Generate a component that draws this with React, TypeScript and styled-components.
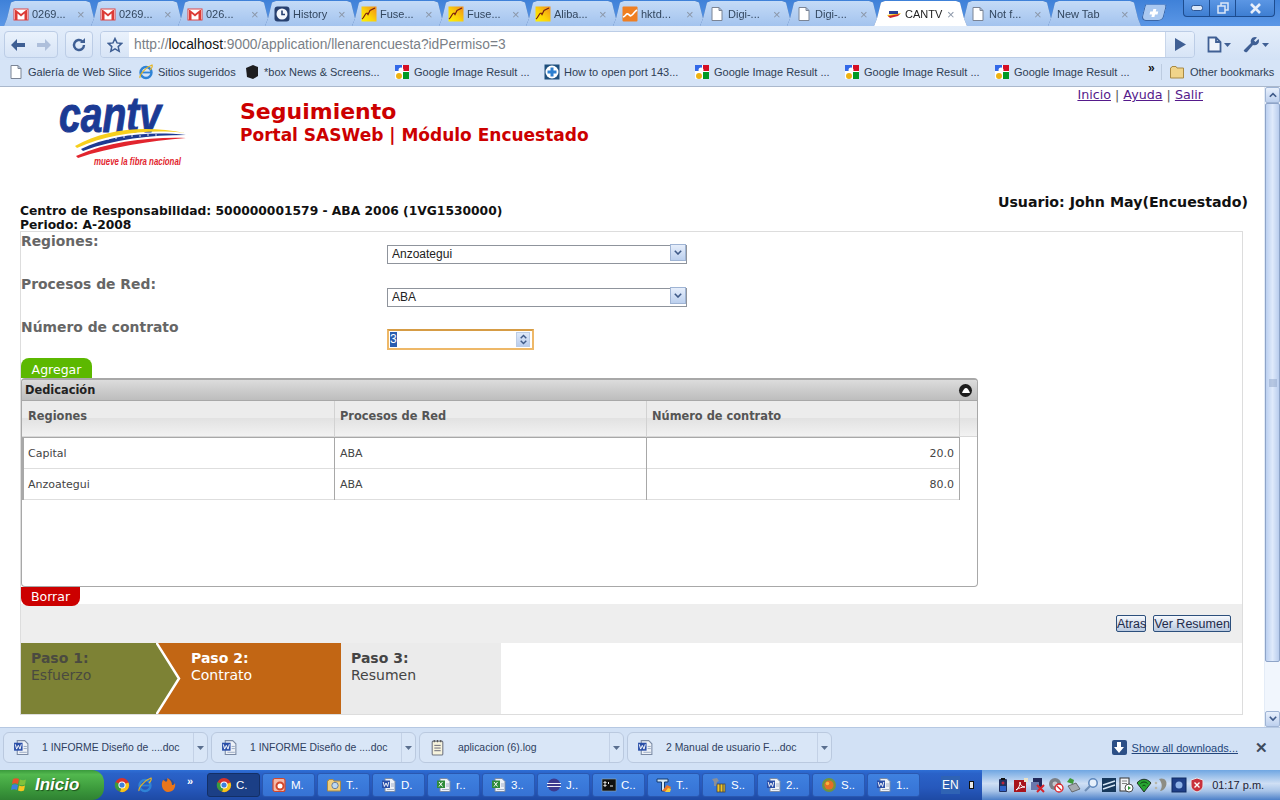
import React from "react";
import styled, { createGlobalStyle } from "styled-components";

const GlobalStyle = createGlobalStyle`
    html, body {
        margin: 0;
        padding: 0;
        background: #fff;
    }
    * {
        box-sizing: border-box;
    }
`;

const UI_FONT = `"Liberation Sans", Arial, sans-serif`;
const PAGE_FONT = `"DejaVu Sans", Verdana, sans-serif`;

type IconName =
    | "gmail" | "clock" | "fuse" | "hktd" | "doc" | "cantv" | "ie" | "box" | "google" | "plus"
    | "folder" | "word" | "log" | "chrome" | "firefox" | "office" | "search" | "excel" | "eclipse"
    | "cmd" | "tfont" | "tool" | "flower";

const IconSvg = styled.svg`
    flex: none;
`;

const Icon: React.FC<{ name: IconName; size?: number }> = ({ name, size = 16 }) => {
    const body = () => {
        switch (name) {
            case "gmail":
                return (
                    <>
                        <rect x="1" y="3" width="14" height="11" fill="#fff" stroke="#d44" strokeWidth="1" />
                        <path d="M2 4v10h2.5V7.5L8 10.5l3.5-3V14H14V4h-1L8 8 3 4z" fill="#dc3b36" />
                    </>
                );
            case "clock":
                return (
                    <>
                        <rect x="0.5" y="0.5" width="15" height="15" rx="3" fill="#27406f" />
                        <circle cx="8" cy="8" r="5.5" fill="#f4f6fa" />
                        <path d="M8 4.5V8.5H11" fill="none" stroke="#27406f" strokeWidth="1.6" />
                    </>
                );
            case "fuse":
                return (
                    <>
                        <defs>
                            <linearGradient id="fuseFill" x1="1" y1="0" x2="0" y2="1">
                                <stop offset="0" stopColor="#f08a1c" />
                                <stop offset="0.55" stopColor="#fbd208" />
                                <stop offset="1" stopColor="#fff200" />
                            </linearGradient>
                        </defs>
                        <rect x="0.5" y="0.5" width="15" height="15" fill="url(#fuseFill)" />
                        <path d="M1 13C3 12 4 7 6 7l1 1.5 2-4 5-2.5" fill="none" stroke="#7a1d10" strokeWidth="1.2" />
                    </>
                );
            case "hktd":
                return (
                    <>
                        <rect x="0.5" y="0.5" width="15" height="15" rx="1" fill="#ef7f22" />
                        <path d="M1 11c3-1 3-4 5-3s2 3 4 1 3-4 5-5" fill="none" stroke="#fff" strokeWidth="1.6" />
                    </>
                );
            case "doc":
                return <path d="M3 1.5h7l3 3v10H3z M10 1.5v3h3" fill="#fff" stroke="#7b8494" strokeWidth="1" />;
            case "cantv":
                return (
                    <>
                        <path d="M1 9l14-2-2 2-10 2z" fill="#f0c419" />
                        <path d="M2 10l12-2-2 2-8 2z" fill="#d2232a" />
                        <rect x="3" y="5" width="9" height="3" fill="#2b3f94" />
                    </>
                );
            case "ie":
                return (
                    <>
                        <circle cx="8" cy="8.5" r="5.5" fill="none" stroke="#2f83d6" strokeWidth="2.4" />
                        <path d="M3 8.5h10" stroke="#2f83d6" strokeWidth="1.8" />
                        <path d="M2 14C1 11 8 3 14 1c1 2-1 4-2 5" fill="none" stroke="#e6b422" strokeWidth="1.2" />
                    </>
                );
            case "box":
                return <path d="M2 4l7-3 5 2v9l-5 3-6-2z" fill="#1d1d1f" />;
            case "google":
                return (
                    <>
                        <rect x="1" y="1" width="14" height="14" rx="1" fill="#fff" />
                        <rect x="1" y="1" width="7" height="6" fill="#3369e8" />
                        <rect x="9" y="1" width="6" height="6" fill="#d50f25" />
                        <rect x="9" y="8" width="6" height="7" fill="#009925" />
                        <circle cx="5" cy="12" r="3" fill="#eeb211" />
                        <circle cx="7" cy="6" r="2.5" fill="#fff" />
                    </>
                );
            case "plus":
                return (
                    <>
                        <rect x="0.5" y="0.5" width="15" height="15" fill="#1e4f7d" />
                        <circle cx="8" cy="8" r="6.5" fill="#fff" />
                        <path d="M8 3.5v9M3.5 8h9" stroke="#2c7fd0" strokeWidth="3" />
                    </>
                );
            case "folder":
                return <path d="M1.5 4V14h13V4H8L7 2.5H3L2 4z" fill="#f0d48a" stroke="#a98a45" strokeWidth="1" />;
            case "word":
                return (
                    <>
                        <path d="M4 1.5h7l3 3v10H4z" fill="#eef2f8" stroke="#7b8aa4" strokeWidth="1" />
                        <rect x="1" y="3.5" width="8" height="7.5" fill="#2a4fa8" />
                        <path d="M2.2 5l1.2 4.5L5 6l1.6 3.5L7.8 5" fill="none" stroke="#fff" strokeWidth="0.9" />
                        <path d="M10 7h3M10 9h3M6 12.5h7" stroke="#8fa0bb" strokeWidth="0.8" />
                    </>
                );
            case "log":
                return (
                    <>
                        <rect x="3" y="2" width="10" height="13" rx="1" fill="#f6f3dc" stroke="#6f7480" strokeWidth="1" />
                        <path d="M5 1v2M8 1v2M11 1v2" stroke="#555" strokeWidth="1" />
                        <path d="M5 6h6M5 8.5h6M5 11h6" stroke="#667" strokeWidth="0.9" />
                    </>
                );
            case "chrome":
                return (
                    <>
                        <circle cx="8" cy="8" r="7" fill="#d8332a" />
                        <path d="M8 8L14.5 5.5A7 7 0 0 1 6 14.8z" fill="#f5c518" />
                        <path d="M8 8L6 14.8A7 7 0 0 1 1.5 5z" fill="#3a9a3f" />
                        <circle cx="8" cy="8" r="3.6" fill="#fff" />
                        <circle cx="8" cy="8" r="2.6" fill="#3d7fdb" />
                    </>
                );
            case "firefox":
                return (
                    <>
                        <circle cx="8" cy="8" r="6.5" fill="#2b4e96" />
                        <path d="M3 3c-3 5 0 12 5 12s8-4 7-9c-1 2-2 2-3 2 0-3-2-6-5-7 1 2 0 3-1 4-1-1-2-2-3-2z" fill="#e8761c" />
                    </>
                );
            case "office":
                return (
                    <>
                        <rect x="2" y="1.5" width="12" height="13" rx="2" fill="#f3b9a8" stroke="#d2472c" strokeWidth="1.2" />
                        <circle cx="9" cy="9" r="3.5" fill="#fff" stroke="#d2472c" strokeWidth="2" />
                    </>
                );
            case "search":
                return (
                    <>
                        <path d="M1.5 4V14h13V4H8L7 2.5H3L2 4z" fill="#f0cf7e" stroke="#a98a45" strokeWidth="1" />
                        <circle cx="9" cy="8.5" r="3.2" fill="#bcd8f2" stroke="#6b7f99" strokeWidth="1" />
                    </>
                );
            case "excel":
                return (
                    <>
                        <path d="M4 1.5h7l3 3v10H4z" fill="#eef2f8" stroke="#7b8aa4" strokeWidth="1" />
                        <rect x="1" y="3.5" width="8" height="7.5" fill="#2e8b3a" />
                        <path d="M3 5l3.5 4.5M6.5 5L3 9.5" stroke="#fff" strokeWidth="1" />
                        <path d="M10 7h3M10 9h3M6 12.5h7" stroke="#8fa0bb" strokeWidth="0.8" />
                    </>
                );
            case "eclipse":
                return (
                    <>
                        <circle cx="8" cy="8" r="6.5" fill="#3d3a8f" />
                        <path d="M1 6.5h14M1 9.5h14" stroke="#f0f0f8" strokeWidth="1.2" />
                    </>
                );
            case "cmd":
                return (
                    <>
                        <rect x="1" y="2" width="14" height="12" fill="#111" stroke="#9aa" strokeWidth="0.6" />
                        <path d="M3 5h2v1H3zM3 8h2v1H3zM7 5l1 1-1 1M9 9h3" stroke="#eee" strokeWidth="1" fill="none" />
                    </>
                );
            case "tfont":
                return (
                    <>
                        <path d="M1 2h11v3H8.5v9h-3V5H1z" fill="#d6e8f5" stroke="#143a6d" strokeWidth="1" />
                        <path d="M6 14l5-6 4 2-2 5z" fill="#e8762b" />
                        <path d="M9 15l3-4 3 1-1 3z" fill="#f3cf3a" />
                    </>
                );
            case "tool":
                return (
                    <>
                        <rect x="6" y="7" width="8" height="8" fill="#f2c623" stroke="#444" strokeWidth="0.8" />
                        <path d="M9 7v8M12 7v8" stroke="#444" strokeWidth="1" />
                        <path d="M1 2l5-1 2 3-2 1-1 4-2 0 0-4z" fill="#8a8f98" />
                    </>
                );
            case "flower":
                return (
                    <>
                        <circle cx="8" cy="8" r="7" fill="#6f9440" />
                        <circle cx="8" cy="8" r="4.6" fill="#e46f26" />
                        <circle cx="6.5" cy="6.5" r="1.8" fill="#f5b63a" />
                    </>
                );
        }
    };
    return (
        <IconSvg width={size} height={size} viewBox="0 0 16 16">
            {body()}
        </IconSvg>
    );
};

const Screen = styled.div`
    width: 1280px;
    height: 800px;
    display: flex;
    flex-direction: column;
    overflow: hidden;
    font-family: ${UI_FONT};
`;

/* ---- browser tabs ---- */

const TabStrip = styled.div`
    height: 26px;
    flex: none;
    display: flex;
    align-items: flex-start;
    padding-left: 7px;
    background: linear-gradient(#3f81d8, #5b97e6);
`;

const Tab = styled.div<{ $active?: boolean }>`
    position: relative;
    width: 87px;
    height: 26px;
    flex: none;
    display: flex;
    align-items: center;
    padding: 2px 0 0 ${(p) => (p.$active ? "9px" : "6px")};
    gap: 3px;
    font-size: 11px;
    color: ${(p) => (p.$active ? "#222" : "#33475f")};
    filter: drop-shadow(0 0 0.6px #3a66a6);
    z-index: ${(p) => (p.$active ? 2 : 1)};

    &::before {
        content: "";
        position: absolute;
        inset: 1px -3px 0 -3px;
        z-index: -1;
        background: ${(p) => (p.$active ? "linear-gradient(#fff, #fff)" : "linear-gradient(#c4dbf7, #a3c3ee)")};
        clip-path: polygon(0 100%, 3px 70%, 7px 6%, 11px 0, calc(100% - 11px) 0, calc(100% - 7px) 6%, calc(100% - 3px) 70%, 100% 100%);
    }
`;

const TabLabel = styled.span`
    flex: 1;
    min-width: 0;
    white-space: nowrap;
`;

const TabClose = styled.span`
    width: 17px;
    flex: none;
    font-size: 13px;
    color: #8b97a8;
`;

const NewTabButton = styled.div`
    width: 22px;
    height: 17px;
    margin: 4px 0 0 5px;
    flex: none;
    display: flex;
    align-items: center;
    justify-content: center;
    background: #a9c8f0;
    border: 1px solid #3a66a6;
    border-top: 1px solid #5b8cd0;
    border-radius: 2px 3px 5px 5px;
    transform: skewX(-14deg);
`;

const WindowControls = styled.div`
    margin-left: 18px;
    width: 92px;
    height: 17px;
    flex: none;
    display: flex;
    border: 1px solid #1d4c8f;
    border-top: none;
    border-radius: 0 0 4px 4px;
    background: linear-gradient(#5b96e4, #3e7ed2);
`;

const WindowButton = styled.div<{ $wide?: boolean }>`
    flex: ${(p) => (p.$wide ? "1" : "none")};
    width: ${(p) => (p.$wide ? "auto" : "26px")};
    display: flex;
    align-items: center;
    justify-content: center;
    border-right: ${(p) => (p.$wide ? "none" : "1px solid #1d4c8f")};
`;

/* ---- toolbar ---- */

const Toolbar = styled.div`
    height: 34px;
    flex: none;
    display: flex;
    align-items: flex-start;
    padding: 5px 0 0 4px;
    background: linear-gradient(#e3edfa, #d3e2f6);
`;

const NavGroup = styled.div<{ $w: number; $gap?: number }>`
    width: ${(p) => p.$w}px;
    height: 27px;
    flex: none;
    margin-left: ${(p) => p.$gap ?? 0}px;
    display: flex;
    align-items: center;
    justify-content: space-around;
    border: 1px solid #bccde6;
    border-radius: 4px;
    background: linear-gradient(#eaf2fc, #d7e4f6);
`;

const AddressGroup = styled.div`
    width: 1095px;
    height: 27px;
    flex: none;
    margin-left: 7px;
    display: flex;
    border: 1px solid #bccde6;
    border-radius: 4px;
    overflow: hidden;
`;

const StarBox = styled.div`
    width: 28px;
    flex: none;
    display: flex;
    align-items: center;
    justify-content: center;
    background: linear-gradient(#eaf2fc, #d7e4f6);
`;

const AddressText = styled.div`
    flex: 1;
    background: #fff;
    padding-left: 5px;
    font-size: 13.8px;
    line-height: 26px;
    color: #7a7f87;
    border-right: 1px solid #c8d6ea;

    b {
        font-weight: normal;
        color: #111;
    }
`;

const GoBox = styled.div`
    width: 28px;
    flex: none;
    display: flex;
    align-items: center;
    justify-content: center;
    background: linear-gradient(#eaf2fc, #d7e4f6);
`;

const ToolIcon = styled.div<{ $gap?: number }>`
    width: 37px;
    flex: none;
    margin-left: ${(p) => p.$gap ?? 0}px;
    height: 27px;
    display: flex;
    align-items: center;
    justify-content: center;
    gap: 2px;
`;

/* ---- bookmarks ---- */

const BookmarkBar = styled.div`
    height: 27px;
    flex: none;
    display: flex;
    align-items: center;
    padding: 0 0 2px 8px;
    background: #d6e4f7;
    border-bottom: 1px solid #aab8cc;
    font-size: 11px;
    color: #2e3e55;
`;

const Bookmark = styled.div<{ $w: number }>`
    width: ${(p) => p.$w}px;
    flex: none;
    display: flex;
    align-items: center;
    gap: 4px;
    white-space: nowrap;
`;

const MoreMark = styled.div`
    width: 13px;
    flex: none;
    margin-left: 4px;
    margin-top: -8px;
    font-size: 12px;
    font-weight: bold;
    color: #111;
`;

const OtherBookmarks = styled.div`
    border-left: 1px solid #bccbe0;
    padding-left: 7px;
    display: flex;
    align-items: center;
    gap: 5px;
    white-space: nowrap;
`;

/* ---- page ---- */

const Viewport = styled.div`
    height: 640px;
    flex: none;
    display: flex;
    background: #fff;
`;

const Page = styled.div`
    flex: 1;
    min-width: 0;
    font-family: ${PAGE_FONT};
`;

const Header = styled.div`
    height: 103px;
    display: flex;
    align-items: flex-start;
    padding: 8px 61px 0 50px;
`;

const TitleBlock = styled.div`
    margin-top: 4px;
    color: #cc0000;
    font-weight: bold;
`;

const Title = styled.div`
    font-size: 22px;
    line-height: 26px;
`;

const SubTitle = styled.div`
    font-size: 17px;
    line-height: 20px;
`;

const TopLinks = styled.div`
    margin: -8px 0 0 auto;
    font-size: 12.7px;
    line-height: 16px;
    color: #555;

    a {
        color: #551a8b;
        text-decoration: underline;
    }
`;

const InfoRow = styled.div`
    height: 41px;
    display: flex;
    justify-content: space-between;
    padding: 0 16px 0 20px;
    color: #111;
    font-weight: bold;
`;

const InfoLeft = styled.div`
    align-self: flex-end;
    font-size: 12.3px;
    line-height: 14px;
    margin-bottom: -1px;
`;

const UserName = styled.div`
    font-size: 14.2px;
    line-height: 17px;
    margin-top: 4px;
`;

const FormBox = styled.div`
    width: 1223px;
    height: 484px;
    margin-left: 20px;
    border: 1px solid #ddd;
    display: flex;
    flex-direction: column;
`;

const FieldRow = styled.div<{ $h: number }>`
    height: ${(p) => p.$h}px;
    flex: none;
    display: grid;
    grid-template-columns: 366px 1fr;
`;

const FieldLabel = styled.label`
    padding-top: 1px;
    font-size: 13.9px;
    line-height: 17px;
    font-weight: bold;
    color: #666;
`;

const SelectWrap = styled.div`
    position: relative;
    width: 300px;
    height: 19px;
    margin-top: 11px;
`;

const NativeSelect = styled.select`
    appearance: none;
    width: 100%;
    height: 100%;
    padding: 0 0 0 4px;
    border: 1px solid #8f949c;
    border-radius: 0;
    background: #fff;
    font-family: ${UI_FONT};
    font-size: 12px;
    color: #222;
`;

const SelectArrow = styled.span`
    position: absolute;
    top: 1px;
    right: 1px;
    width: 16px;
    height: 17px;
    display: flex;
    align-items: center;
    justify-content: center;
    background: linear-gradient(#e6eefb, #bcd0ee);
    border: 1px solid #9fb4d4;
`;

const NumberBox = styled.div`
    width: 147px;
    height: 21px;
    margin-top: 11px;
    display: flex;
    align-items: center;
    padding: 0 2px 0 1px;
    border: 2px solid #eeb868;
    border-top-color: #d69c45;
    background: #fff;
    font-family: ${UI_FONT};
    font-size: 12px;
`;

const SelectedText = styled.span`
    background: #2a5db0;
    color: #fff;
    line-height: 15px;
`;

const Spinner = styled.span`
    margin-left: auto;
    width: 14px;
    height: 15px;
    display: flex;
    flex-direction: column;
    align-items: center;
    justify-content: space-around;
    background: linear-gradient(#dfe9f9, #b9cdee);
    border: 1px solid #bccde6;
`;

const ActionPill = styled.button<{ $color: string; $w: number }>`
    position: relative;
    z-index: 1;
    width: ${(p) => p.$w}px;
    height: 19px;
    flex: none;
    margin: 0;
    padding: 0;
    border: none;
    border-radius: 8px;
    background: ${(p) => p.$color};
    color: #fff;
    font-family: ${PAGE_FONT};
    font-size: 12.5px;
    line-height: 19px;
`;

const AddButton = styled(ActionPill)`
    height: 20px;
    padding-top: 2px;
    border-radius: 8px 8px 0 0;
`;

const DeleteButton = styled(ActionPill)`
    margin-bottom: -2px;
    border-radius: 0 0 8px 8px;
`;

const Panel = styled.div`
    width: 957px;
    height: 209px;
    flex: none;
    border: 1px solid #a8a8a8;
    border-top-width: 2px;
    border-radius: 4px;
    overflow: hidden;
`;

const PanelHead = styled.div`
    height: 21px;
    display: flex;
    align-items: center;
    justify-content: space-between;
    padding: 0 5px 0 3px;
    background: linear-gradient(#dcdcdc, #bdbdbd);
    border-bottom: 1px solid #a8a8a8;
    font-size: 11.4px;
    font-weight: bold;
    color: #222;
`;

const CollapseDot = styled.span`
    width: 13px;
    height: 13px;
    border-radius: 50%;
    background: #1c1c1c;
    display: flex;
    align-items: center;
    justify-content: center;
`;

const ColumnHead = styled.div`
    height: 36px;
    display: grid;
    grid-template-columns: 313px 312px 313px 1fr;
    background: linear-gradient(#ececec 0 50%, #e2e2e2 50%, #f2f2f2);
    border-bottom: 1px solid #d8d8d8;
`;

const HeadCell = styled.div`
    padding: 8px 0 0 5px;
    font-size: 11.4px;
    line-height: 15px;
    font-weight: bold;
    color: #555;
    border-right: 1px solid #d2d2d2;

    &:first-child {
        padding-left: 6px;
    }

    &:last-child {
        border-right: none;
    }
`;

const DataTable = styled.div`
    width: 938px;
    border-left: 2px solid #a8a8a8;
    border-right: 1px solid #a8a8a8;
    border-top: 1px solid #a8a8a8;
`;

const DataRow = styled.div`
    height: 31px;
    display: grid;
    grid-template-columns: 311px 312px 1fr;
    border-bottom: 1px solid #dedede;
`;

const DataCell = styled.div<{ $right?: boolean }>`
    padding: 1px ${(p) => (p.$right ? "5px" : "0")} 0 5px;
    font-size: 11px;
    line-height: 30px;
    color: #444;
    text-align: ${(p) => (p.$right ? "right" : "left")};
    border-right: 1px solid #a8a8a8;

    &:first-child {
        padding-left: 4px;
    }

    &:last-child {
        border-right: none;
    }
`;

const ActionBand = styled.div`
    height: 39px;
    flex: none;
    display: flex;
    justify-content: flex-end;
    align-items: flex-start;
    gap: 7px;
    padding: 11px 11px 0 0;
    background: #eeeeee;
`;

const FormButton = styled.button<{ $w: number }>`
    width: ${(p) => p.$w}px;
    height: 17px;
    margin: 0;
    padding: 0;
    border: 1px solid #2c4f7c;
    border-radius: 2px;
    background: linear-gradient(#f6f8fc, #b9c9e0);
    font-family: ${UI_FONT};
    font-size: 12.5px;
    line-height: 14px;
    color: #1e2a4a;
`;

const Steps = styled.div`
    height: 71px;
    flex: none;
    display: flex;
`;

const Step = styled.div<{ $bg: string; $color: string; $w: number; $pad: number }>`
    width: ${(p) => p.$w}px;
    flex: none;
    padding: 7px 0 0 ${(p) => p.$pad}px;
    background: ${(p) => p.$bg};
    color: ${(p) => p.$color};
    font-size: 14px;
    line-height: 17px;
    position: relative;

    b {
        display: block;
    }
`;

const StepArrow = styled.svg`
    position: absolute;
    top: 0;
    right: -25px;
    z-index: 1;
`;

/* ---- scrollbar ---- */

const ScrollBar = styled.div`
    width: 16px;
    flex: none;
    display: flex;
    flex-direction: column;
    background: #f1f6fd;
    border-left: 1px solid #e4ecf7;
`;

const ScrollButton = styled.div`
    height: 16px;
    flex: none;
    display: flex;
    align-items: center;
    justify-content: center;
    background: linear-gradient(#e8f0fc, #bdd0ee);
    border: 1px solid #9fb4d4;
    border-radius: 2px;
`;

const ScrollThumb = styled.div`
    height: 559px;
    flex: none;
    display: flex;
    align-items: center;
    justify-content: center;
    background: linear-gradient(90deg, #bcd0f0, #dfeafb 50%, #b9cdee);
    border: 1px solid #8ea4c8;
    border-radius: 2px;
`;

const ScrollSpace = styled.div`
    flex: 1;
`;

/* ---- downloads ---- */

const DownloadBar = styled.div`
    height: 43px;
    flex: none;
    display: flex;
    align-items: flex-start;
    padding: 4px 0 0 3px;
    gap: 3px;
    background: #d2e1f5;
    border-top: 1px solid #b6c8e2;
`;

const DownloadItem = styled.div`
    width: 205px;
    height: 31px;
    flex: none;
    display: flex;
    align-items: center;
    padding-left: 9px;
    border: 1px solid #bac9df;
    border-radius: 6px;
    background: #d9e6f7;
    font-size: 10.4px;
    color: #2e4060;
`;

const DownloadName = styled.span`
    flex: 1;
    padding-left: 12px;
    white-space: nowrap;
`;

const DownloadMenu = styled.span`
    width: 14px;
    height: 100%;
    flex: none;
    display: flex;
    align-items: center;
    justify-content: center;
    border-left: 1px solid #c3d1e6;
`;

const ShowAll = styled.div`
    margin-left: auto;
    margin-top: 8px;
    display: flex;
    align-items: center;
    gap: 5px;
    font-size: 11px;
    color: #22457a;

    u {
        white-space: nowrap;
    }
`;

const DownloadIcon = styled.span`
    width: 15px;
    height: 15px;
    display: flex;
    align-items: center;
    justify-content: center;
    border-radius: 2px;
    background: #2c4f86;
`;

const CloseBar = styled.div`
    width: 39px;
    padding-left: 2px;
    margin-top: 7px;
    text-align: center;
    font-size: 15px;
    font-weight: bold;
    color: #3d4a5c;
`;

/* ---- windows taskbar ---- */

const Taskbar = styled.div`
    height: 30px;
    flex: none;
    display: flex;
    align-items: stretch;
    background: linear-gradient(#2e6fd6, #2a62c8 12%, #2658bc 60%, #1e4aa4);
    color: #fff;
    font-size: 11.5px;
`;

const StartButton = styled.div`
    width: 104px;
    flex: none;
    display: flex;
    align-items: center;
    gap: 6px;
    padding-left: 11px;
    background: linear-gradient(#3a9a3c, #52b84e 15%, #3d9c3d 60%, #2f8132);
    border-radius: 0 12px 12px 0;
    font-style: italic;
    font-weight: bold;
    font-size: 17px;
    text-shadow: 1px 1px 1px #1c4f1c;
`;

const QuickLaunch = styled.div`
    width: 103px;
    flex: none;
    display: flex;
    align-items: center;
    gap: 7px;
    padding-left: 10px;
`;

const QuickMore = styled.span`
    margin: -8px 0 0 4px;
    font-size: 11px;
    font-weight: bold;
`;

const TaskList = styled.div`
    width: 722px;
    flex: none;
    display: flex;
    align-items: center;
    gap: 2px;
`;

const TaskButton = styled.div<{ $active?: boolean }>`
    width: 53px;
    height: 24px;
    flex: none;
    display: flex;
    align-items: center;
    gap: 4px;
    padding-left: 8px;
    border-radius: 3px;
    background: ${(p) => (p.$active ? "#1b3f86" : "linear-gradient(#3f81e0, #3672d4)")};
    border: 1px solid ${(p) => (p.$active ? "#132f66" : "#2a58b0")};
    white-space: nowrap;
    overflow: hidden;
`;

const LangBlock = styled.div`
    width: 53px;
    flex: none;
    display: flex;
    align-items: center;
    padding-left: 12px;
    gap: 9px;
    font-size: 12px;
`;

const LangCode = styled.span`
    padding: 2px 1px;
    background: #2f63b4;
`;

const Tray = styled.div`
    flex: 1;
    display: flex;
    align-items: center;
    padding-left: 13px;
    gap: 1.6px;
    background: linear-gradient(#6fa6e2, #cfdff4 45%, #a8c4e8 70%, #4d80c8);
    color: #223;
    font-size: 11px;
`;

const Clock = styled.span`
    margin-left: 6px;
    white-space: nowrap;
`;

/* ---- small drawn glyphs ---- */

const Chevron: React.FC<{ up?: boolean; color?: string; size?: number }> = ({ up, color = "#3f5a88", size = 8 }) => (
    <svg width={size} height={size * 0.7} viewBox="0 0 10 7">
        <path d={up ? "M1 6l4-4 4 4" : "M1 1l4 4 4-4"} fill="none" stroke={color} strokeWidth="2" />
    </svg>
);

const Caret: React.FC<{ color?: string }> = ({ color = "#5a6f8f" }) => (
    <svg width="7" height="4" viewBox="0 0 7 4">
        <path d="M0 0h7L3.5 4z" fill={color} />
    </svg>
);

const BackArrow: React.FC<{ color: string }> = ({ color }) => (
    <svg width="16" height="14" viewBox="0 0 16 14">
        <path d="M1 7l6-6v4h8v4H7v4z" fill={color} />
    </svg>
);

const ForwardArrow: React.FC<{ color: string }> = ({ color }) => (
    <svg width="16" height="14" viewBox="0 0 16 14">
        <path d="M15 7L9 1v4H1v4h8v4z" fill={color} />
    </svg>
);

const TrayGlyph: React.FC<{ index: number }> = ({ index }) => {
    const glyphs = [
        <>
            <rect x="4" y="2" width="8" height="13" rx="1" fill="#20305f" />
            <rect x="6" y="1" width="4" height="2" fill="#111" />
            <rect x="5" y="9" width="6" height="5" fill="#2f62c9" />
            <path d="M6.5 6h3M8 4.5v3" stroke="#e23" strokeWidth="1" />
        </>,
        <>
            <rect x="1" y="3" width="12" height="12" fill="#a8141c" />
            <path d="M3 13c3-2 4-5 4-8 0 3 2 5 5 5-3 0-6 1-9 3z" fill="none" stroke="#fff" strokeWidth="1" />
            <rect x="11" y="1" width="4" height="4" fill="#e9e2c9" />
        </>,
        <>
            <rect x="3" y="1" width="9" height="10" fill="#232a5c" />
            <rect x="1" y="5" width="8" height="8" fill="#6a78ad" />
            <path d="M7 8l7 7M14 8l-7 7" stroke="#d8232a" strokeWidth="2" />
        </>,
        <>
            <circle cx="7" cy="7" r="6" fill="#7a7f86" />
            <circle cx="7" cy="7" r="2.5" fill="#c4c7cc" />
            <circle cx="11" cy="11" r="4" fill="#fff" stroke="#d8232a" strokeWidth="1.3" />
            <path d="M8.5 8.5l5 5" stroke="#d8232a" strokeWidth="1.3" />
        </>,
        <>
            <path d="M2 5l3-4 4 2-1 4z" fill="#3f9a3a" />
            <path d="M3 9l8-3 4 6-8 3z" fill="#a6abb0" stroke="#555" strokeWidth="0.8" />
        </>,
        <>
            <circle cx="10" cy="6" r="4.2" fill="#e6f0fb" stroke="#5c86bc" strokeWidth="1.5" />
            <path d="M7 9l-5 5" stroke="#6f8fb8" strokeWidth="2.2" />
        </>,
        <>
            <rect x="1" y="1" width="14" height="14" fill="#17385c" />
            <path d="M2 8l12-4M2 12l12-4" stroke="#d7e6f4" strokeWidth="1.4" />
        </>,
        <>
            <rect x="2" y="1" width="9" height="13" fill="#f1f3f6" stroke="#333" strokeWidth="1" />
            <path d="M4 4h5M4 6.5h5" stroke="#666" strokeWidth="0.8" />
            <circle cx="11" cy="11" r="4" fill="#fff" stroke="#222" strokeWidth="0.8" />
            <path d="M10 9l3 2-3 2z" fill="#2a9a35" />
        </>,
        <>
            <path d="M1 6c4-5 10-5 14 0l-7 9z" fill="#27a531" stroke="#111" strokeWidth="0.8" />
            <path d="M4.5 6.5c2-2 5-2 7 0M6.5 9c1-1 2-1 3 0" fill="none" stroke="#0c3a10" strokeWidth="1" />
        </>,
        <>
            <path d="M6 2c5-2 9 2 7 7-1 3-4 5-6 5 2-3 3-7-1-12z" fill="#8d8d84" />
            <circle cx="3" cy="6" r="1.3" fill="#b7b7ad" />
            <circle cx="3" cy="11" r="1.3" fill="#b7b7ad" />
        </>,
        <>
            <rect x="1" y="1" width="14" height="14" fill="#1f3f88" stroke="#0f2a63" strokeWidth="1" />
            <circle cx="8" cy="8" r="3.5" fill="#8fb3e8" />
        </>,
        <>
            <path d="M8 1l6 2v5c0 4-3 6-6 7-3-1-6-3-6-7V3z" fill="#c9303c" stroke="#dfe6ee" strokeWidth="1" />
            <path d="M5.5 5.5l5 5M10.5 5.500l-5 5" stroke="#fff" strokeWidth="1.4" />
        </>,
    ];
    return (
        <IconSvg width="16" height="16" viewBox="0 0 16 16">
            {glyphs[index]}
        </IconSvg>
    );
};

const Logo: React.FC = () => (
    <IconSvg width="190" height="75" viewBox="0 0 190 75">
        <text
            x="9"
            y="37"
            textLength="102"
            lengthAdjust="spacingAndGlyphs"
            fontFamily="'Liberation Sans', Arial, sans-serif"
            fontSize="50"
            fontStyle="italic"
            fontWeight="bold"
            fill="#1b3a94"
            stroke="#1b3a94"
            strokeWidth="1"
        >
            cantv
        </text>
        <path d="M25 51C55 34 95 30 135 38C100 34 60 38 27 53z" fill="#f6cf1d" />
        <path d="M31 54C60 40 100 36 136 40C100 40 65 44 33 56z" fill="#1d3a92" />
        <path d="M26 61C60 46 100 42 136 43C100 46 60 52 28 63z" fill="#e2252e" />
        <g fill="#fff">
            <circle cx="58" cy="44" r="0.8" />
            <circle cx="66" cy="43" r="0.8" />
            <circle cx="74" cy="42" r="0.8" />
            <circle cx="82" cy="41" r="0.8" />
            <circle cx="90" cy="41" r="0.8" />
            <circle cx="98" cy="40" r="0.8" />
            <circle cx="106" cy="40" r="0.8" />
        </g>
        <text
            x="44"
            y="70"
            textLength="87"
            lengthAdjust="spacingAndGlyphs"
            fontFamily="'Liberation Sans', Arial, sans-serif"
            fontSize="10"
            fontStyle="italic"
            fontWeight="bold"
            fill="#e2252e"
        >
            mueve la fibra nacional
        </text>
    </IconSvg>
);

const tabs: { icon?: IconName; label: string; active?: boolean }[] = [
    { icon: "gmail", label: "0269..." },
    { icon: "gmail", label: "0269..." },
    { icon: "gmail", label: "026..." },
    { icon: "clock", label: "History" },
    { icon: "fuse", label: "Fuse..." },
    { icon: "fuse", label: "Fuse..." },
    { icon: "fuse", label: "Aliba..." },
    { icon: "hktd", label: "hktd..." },
    { icon: "doc", label: "Digi-..." },
    { icon: "doc", label: "Digi-..." },
    { icon: "cantv", label: "CANTV", active: true },
    { icon: "doc", label: "Not f..." },
    { label: "New Tab" },
];

const bookmarks: { icon: IconName; label: string; w: number }[] = [
    { icon: "doc", label: "Galería de Web Slice", w: 130 },
    { icon: "ie", label: "Sitios sugeridos", w: 106 },
    { icon: "box", label: "*box News & Screens...", w: 150 },
    { icon: "google", label: "Google Image Result ...", w: 150 },
    { icon: "plus", label: "How to open port 143...", w: 150 },
    { icon: "google", label: "Google Image Result ...", w: 150 },
    { icon: "google", label: "Google Image Result ...", w: 150 },
    { icon: "google", label: "Google Image Result ...", w: 150 },
];

const downloads: { icon: IconName; name: string }[] = [
    { icon: "word", name: "1 INFORME Diseño de ....doc" },
    { icon: "word", name: "1 INFORME Diseño de ....doc" },
    { icon: "log", name: "aplicacion (6).log" },
    { icon: "word", name: "2 Manual de usuario F....doc" },
];

const tasks: { icon: IconName; label: string; active?: boolean }[] = [
    { icon: "chrome", label: "C.", active: true },
    { icon: "office", label: "M." },
    { icon: "search", label: "T.." },
    { icon: "word", label: "D." },
    { icon: "excel", label: "r.." },
    { icon: "excel", label: "3.." },
    { icon: "eclipse", label: "J.." },
    { icon: "cmd", label: "C.." },
    { icon: "tfont", label: "T.." },
    { icon: "tool", label: "S.." },
    { icon: "word", label: "2.." },
    { icon: "flower", label: "S.." },
    { icon: "word", label: "1.." },
];

const steps = [
    { n: "Paso 1:", t: "Esfuerzo", bg: "#7d8235", color: "#4a4a40", w: 135, pad: 10 },
    { n: "Paso 2:", t: "Contrato", bg: "#c26614", color: "#fff", w: 185, pad: 35 },
    { n: "Paso 3:", t: "Resumen", bg: "#ebebeb", color: "#444", w: 160, pad: 10 },
];

const App: React.FC = () => {
    return (
        <>
            <GlobalStyle />
            <Screen>
                <TabStrip>
                    {tabs.map((tab, i) => (
                        <Tab key={i} $active={tab.active}>
                            {tab.icon && <Icon name={tab.icon} />}
                            <TabLabel>{tab.label}</TabLabel>
                            <TabClose>×</TabClose>
                        </Tab>
                    ))}
                    <NewTabButton>
                        <svg width="10" height="10" viewBox="0 0 10 10">
                            <path d="M5 1v8M1 5h8" stroke="#fff" strokeWidth="3" />
                        </svg>
                    </NewTabButton>
                    <WindowControls>
                        <WindowButton>
                            <svg width="12" height="6" viewBox="0 0 12 6">
                                <rect x="0.5" y="0.5" width="11" height="5" rx="2" fill="#dbe7f7" stroke="#2c5696" />
                            </svg>
                        </WindowButton>
                        <WindowButton>
                            <svg width="12" height="12" viewBox="0 0 12 12">
                                <rect x="4" y="1" width="7" height="7" fill="none" stroke="#dbe7f7" strokeWidth="1.5" />
                                <rect x="1" y="4" width="7" height="7" fill="#4f8adc" stroke="#dbe7f7" strokeWidth="1.5" />
                            </svg>
                        </WindowButton>
                        <WindowButton $wide>
                            <svg width="13" height="11" viewBox="0 0 13 11">
                                <path d="M2 1l9 9M11 1l-9 9" stroke="#e6eefa" strokeWidth="2.6" />
                            </svg>
                        </WindowButton>
                    </WindowControls>
                </TabStrip>

                <Toolbar>
                    <NavGroup $w={54}>
                        <BackArrow color="#3f5f94" />
                        <ForwardArrow color="#aebfdb" />
                    </NavGroup>
                    <NavGroup $w={28} $gap={7}>
                        <svg width="16" height="16" viewBox="0 0 16 16">
                            <path d="M13 8a5 5 0 1 1-1.6-3.7" fill="none" stroke="#3f5f94" strokeWidth="2.4" />
                            <path d="M14 1v5H9z" fill="#3f5f94" />
                        </svg>
                    </NavGroup>
                    <AddressGroup>
                        <StarBox>
                            <svg width="16" height="16" viewBox="0 0 16 16">
                                <path d="M8 1.5l2 4.4 4.7.5-3.5 3.2 1 4.7L8 11.900l-4.200 2.400 1-4.700L1.300 6.400 6 5.900z" fill="none" stroke="#3f5f94" strokeWidth="1.5" />
                            </svg>
                        </StarBox>
                        <AddressText>
                            http://<b>localhost</b>:9000/application/llenarencuesta?idPermiso=3
                        </AddressText>
                        <GoBox>
                            <svg width="11" height="13" viewBox="0 0 11 13">
                                <path d="M0 0l11 6.5L0 13z" fill="#3f5f94" />
                            </svg>
                        </GoBox>
                    </AddressGroup>
                    <ToolIcon $gap={5}>
                        <svg width="15" height="17" viewBox="0 0 15 17">
                            <path d="M1.5 1.5H9l4.500 4.500v9.500h-12zM9 1.500V6h4.500" fill="#eef3fb" stroke="#3f5f94" strokeWidth="1.8" />
                        </svg>
                        <Caret color="#3f5f94" />
                    </ToolIcon>
                    <ToolIcon>
                        <svg width="17" height="17" viewBox="0 0 17 17">
                            <path d="M1 14l7-7c-1-3 1-6 4-6 1 0 1.5.2 2 .5L11 4.500 12.500 6 15.500 3c.3.5.5 1 .5 2 0 3-3 5-6 4l-6 7c-1 1-4-1-3-2z" fill="#3f5f94" />
                        </svg>
                        <Caret color="#3f5f94" />
                    </ToolIcon>
                </Toolbar>

                <BookmarkBar>
                    {bookmarks.map((b, i) => (
                        <Bookmark key={i} $w={b.w}>
                            <Icon name={b.icon} />
                            {b.label}
                        </Bookmark>
                    ))}
                    <MoreMark>»</MoreMark>
                    <OtherBookmarks>
                        <Icon name="folder" />
                        Other bookmarks
                    </OtherBookmarks>
                </BookmarkBar>

                <Viewport>
                    <Page>
                        <Header>
                            <Logo />
                            <TitleBlock>
                                <Title>Seguimiento</Title>
                                <SubTitle>Portal SASWeb | Módulo Encuestado</SubTitle>
                            </TitleBlock>
                            <TopLinks>
                                <a>Inicio</a> | <a>Ayuda</a> | <a>Salir</a>
                            </TopLinks>
                        </Header>
                        <InfoRow>
                            <InfoLeft>
                                Centro de Responsabilidad: 500000001579 - ABA 2006 (1VG1530000)
                                <br />
                                Periodo: A-2008
                            </InfoLeft>
                            <UserName>Usuario: John May(Encuestado)</UserName>
                        </InfoRow>
                        <FormBox>
                            <FieldRow $h={43}>
                                <FieldLabel>Regiones:</FieldLabel>
                                <SelectWrap>
                                    <NativeSelect defaultValue="Anzoategui">
                                        <option>Anzoategui</option>
                                        <option>Capital</option>
                                    </NativeSelect>
                                    <SelectArrow>
                                        <Chevron />
                                    </SelectArrow>
                                </SelectWrap>
                            </FieldRow>
                            <FieldRow $h={43}>
                                <FieldLabel>Procesos de Red:</FieldLabel>
                                <SelectWrap>
                                    <NativeSelect defaultValue="ABA">
                                        <option>ABA</option>
                                    </NativeSelect>
                                    <SelectArrow>
                                        <Chevron />
                                    </SelectArrow>
                                </SelectWrap>
                            </FieldRow>
                            <FieldRow $h={40}>
                                <FieldLabel>Número de contrato</FieldLabel>
                                <NumberBox>
                                    <SelectedText>3</SelectedText>
                                    <Spinner>
                                        <Chevron up size={7} />
                                        <Chevron size={7} />
                                    </Spinner>
                                </NumberBox>
                            </FieldRow>
                            <AddButton $color="#5cb800" $w={71}>Agregar</AddButton>
                            <Panel>
                                <PanelHead>
                                    Dedicación
                                    <CollapseDot>
                                        <svg width="8" height="5" viewBox="0 0 8 5">
                                            <path d="M0 5C1 2 2.5 0 4 0s3 2 4 5z" fill="#fff" />
                                        </svg>
                                    </CollapseDot>
                                </PanelHead>
                                <ColumnHead>
                                    <HeadCell>Regiones</HeadCell>
                                    <HeadCell>Procesos de Red</HeadCell>
                                    <HeadCell>Número de contrato</HeadCell>
                                    <HeadCell />
                                </ColumnHead>
                                <DataTable>
                                    <DataRow>
                                        <DataCell>Capital</DataCell>
                                        <DataCell>ABA</DataCell>
                                        <DataCell $right>20.0</DataCell>
                                    </DataRow>
                                    <DataRow>
                                        <DataCell>Anzoategui</DataCell>
                                        <DataCell>ABA</DataCell>
                                        <DataCell $right>80.0</DataCell>
                                    </DataRow>
                                </DataTable>
                            </Panel>
                            <DeleteButton $color="#cc0000" $w={59}>Borrar</DeleteButton>
                            <ActionBand>
                                <FormButton $w={30}>Atras</FormButton>
                                <FormButton $w={78}>Ver Resumen</FormButton>
                            </ActionBand>
                            <Steps>
                                {steps.map((s, i) => (
                                    <Step key={i} $bg={s.bg} $color={s.color} $w={s.w} $pad={s.pad}>
                                        <b>{s.n}</b>
                                        {s.t}
                                        {i === 0 && (
                                            <StepArrow width="25" height="71" viewBox="0 0 25 71">
                                                <path d="M0 0L23 35.5 0 71z" fill="#7d8235" />
                                                <path d="M0 -1L23 35.5 0 72" fill="none" stroke="#fff" strokeWidth="2.5" />
                                            </StepArrow>
                                        )}
                                    </Step>
                                ))}
                            </Steps>
                        </FormBox>
                    </Page>
                    <ScrollBar>
                        <ScrollButton>
                            <Chevron up />
                        </ScrollButton>
                        <ScrollThumb>
                            <svg width="8" height="8" viewBox="0 0 8 8">
                                <path d="M0 1h8M0 3h8M0 5h8M0 7h8" stroke="#8ea4c8" strokeWidth="1" />
                            </svg>
                        </ScrollThumb>
                        <ScrollSpace />
                        <ScrollButton>
                            <Chevron />
                        </ScrollButton>
                    </ScrollBar>
                </Viewport>

                <DownloadBar>
                    {downloads.map((d, i) => (
                        <DownloadItem key={i}>
                            <Icon name={d.icon} size={17} />
                            <DownloadName>{d.name}</DownloadName>
                            <DownloadMenu>
                                <Caret />
                            </DownloadMenu>
                        </DownloadItem>
                    ))}
                    <ShowAll>
                        <DownloadIcon>
                            <svg width="10" height="11" viewBox="0 0 10 11">
                                <path d="M3 0h4v5h3L5 11 0 5h3z" fill="#fff" />
                            </svg>
                        </DownloadIcon>
                        <u>Show all downloads...</u>
                    </ShowAll>
                    <CloseBar>✕</CloseBar>
                </DownloadBar>

                <Taskbar>
                    <StartButton>
                        <svg width="18" height="18" viewBox="0 0 18 18">
                            <path d="M2 3c2-1 4-1 6 0l-1 5c-2-1-4-1-6 0z" fill="#e8512b" />
                            <path d="M9 3.5c2 1 4 1 6 0l-1 5c-2 1-4 1-6 0z" fill="#7ec23c" />
                            <path d="M1 9c2-1 4-1 6 0l-1 5c-2-1-4-1-6 0z" fill="#3d7fe0" />
                            <path d="M8 9.5c2 1 4 1 6 0l-1 5c-2 1-4 1-6 0z" fill="#f6c51f" />
                        </svg>
                        Inicio
                    </StartButton>
                    <QuickLaunch>
                        <Icon name="chrome" />
                        <Icon name="ie" />
                        <Icon name="firefox" />
                        <QuickMore>»</QuickMore>
                    </QuickLaunch>
                    <TaskList>
                        {tasks.map((t, i) => (
                            <TaskButton key={i} $active={t.active}>
                                <Icon name={t.icon} />
                                {t.label}
                            </TaskButton>
                        ))}
                    </TaskList>
                    <LangBlock>
                        <LangCode>EN</LangCode>
                        <svg width="5" height="8" viewBox="0 0 5 8">
                            <rect x="0.5" y="0.5" width="4" height="7" fill="#e8e8e8" stroke="#111" />
                        </svg>
                    </LangBlock>
                    <Tray>
                        {Array.from({ length: 12 }, (_, i) => (
                            <TrayGlyph key={i} index={i} />
                        ))}
                        <Clock>01:17 p.m.</Clock>
                    </Tray>
                </Taskbar>
            </Screen>
        </>
    );
};

export default App;
